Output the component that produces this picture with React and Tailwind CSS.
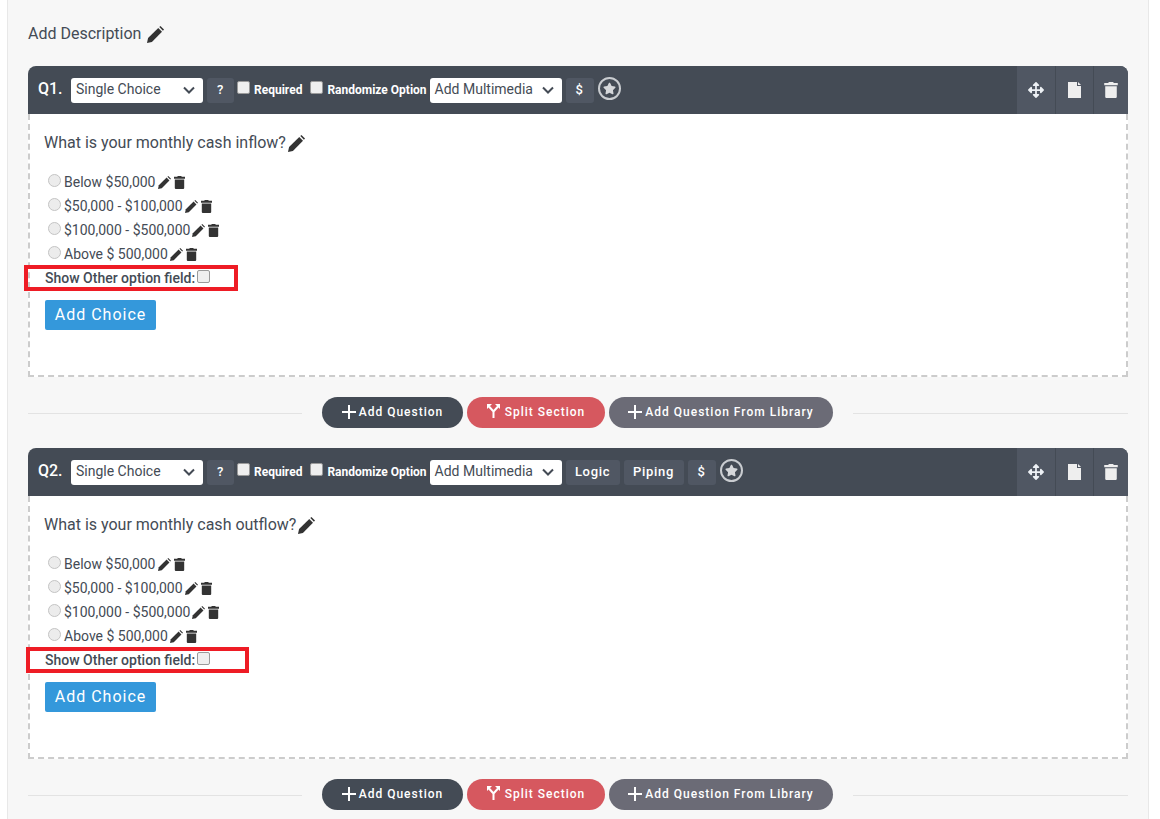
import { FaArrowsAlt, FaStar } from "react-icons/fa";

const options = ["Below $50,000", "$50,000 - $100,000", "$100,000 - $500,000", "Above $ 500,000"];

function Chevron() {
  return (
    <svg className="w-[12px] h-[8px] text-[#444b55]" viewBox="0 0 12 8" fill="none" stroke="currentColor" strokeWidth="2">
      <path d="M1 1.5l5 5 5-5" />
    </svg>
  );
}

function Pencil({ className = "" }) {
  return (
    <svg className={className} viewBox="0 0 16 16" fill="currentColor">
      <path d="M0 16l1-4.6L10.6 1.9l3.5 3.5L4.6 15z" />
      <path d="M11.6 1l1-1L16 3.4l-1 1z" />
    </svg>
  );
}

function Trash({ className = "" }) {
  return (
    <svg className={className} viewBox="0 0 11 13" fill="currentColor">
      <path d="M3.5 0h4v.8H11v1.9H0V.8h3.5z" />
      <path d="M.8 3.4h9.4V12a1 1 0 01-1 1H1.8a1 1 0 01-1-1z" />
    </svg>
  );
}

function FileIcon({ className = "" }) {
  return (
    <svg className={className} viewBox="0 0 13 16" fill="currentColor">
      <path d="M0 0h9v4h4v12H0z" />
      <path d="M10 0l3 3h-3z" />
    </svg>
  );
}

function Plus() {
  return (
    <svg className="w-[14px] h-[14px] mr-[3px]" viewBox="0 0 14 14" fill="currentColor">
      <path d="M6 0h2v6h6v2H8v6H6V8H0V6h6z" />
    </svg>
  );
}

function SplitIcon() {
  return (
    <svg className="w-[13px] h-[14px] mr-[5px] -mt-[1px]" viewBox="0 0 13 14" fill="none" stroke="currentColor" strokeWidth="2">
      <path d="M6.5 14V7.5L2 2.5M6.5 7.5L11 2.5" />
      <path d="M0 0h5L0 5zM13 0H8l5 5z" fill="currentColor" stroke="none" />
    </svg>
  );
}

function FakeSelect({ label }) {
  return (
    <div className="w-[132px] h-[25px] bg-white rounded-[3px] flex items-center justify-between pl-[5px] pr-[8px] pb-px text-[14px] text-[#444b55]">
      <span>{label}</span>
      <Chevron />
    </div>
  );
}

function HeaderButton({ children, className = "px-[10px]" }) {
  return (
    <div className={`h-[25px] bg-[#505763] rounded-[3px] flex items-center justify-center pb-px text-white text-[13px] font-medium tracking-[0.7px] ${className}`}>
      {children}
    </div>
  );
}

function Check({ className = "" }) {
  return <span className={`inline-block w-[13px] h-[13px] rounded-[2px] border border-[#9a9a9a] bg-[#efefef] ${className}`} />;
}

function OptionRow({ text }) {
  return (
    <div className="h-[24px] flex items-center pl-[3px] text-[14px] text-[#444b55]">
      <span className="w-[13px] h-[13px] rounded-full border border-[#c4c4c4] bg-[#ececec] mr-[3px] -mt-[4px]" />
      <span>{text}</span>
      <Pencil className="ml-[2px] w-[13px] h-[13px] text-[#333]" />
      <Trash className="ml-[3px] w-[11px] h-[13px] text-[#333]" />
    </div>
  );
}

function ActionRow() {
  const btn = "h-[31px] rounded-full flex items-center justify-center pb-[2px] text-white text-[12px] font-medium tracking-[1px]";
  return (
    <div className="flex items-center h-[31px] my-[20px]">
      <div className="w-[274px] h-px mt-[2px] bg-[#e3e3e3]" />
      <div className="ml-[20px] flex items-center gap-[4px]">
        <div className={`${btn} w-[141px] bg-[#444b55]`}>
          <Plus />Add Question
        </div>
        <div className={`${btn} w-[138px] bg-[#d6585f]`}>
          <SplitIcon />Split Section
        </div>
        <div className={`${btn} w-[224px] bg-[#6b6b76]`}>
          <Plus />Add Question From Library
        </div>
      </div>
      <div className="ml-[20px] flex-1 h-px mt-[2px] bg-[#e3e3e3]" />
    </div>
  );
}

function QuestionCard({ n, title, boxClass, extraButtons }) {
  return (
    <div>
      <div className="h-[48px] bg-[#444b55] rounded-t-[8px] flex items-center pl-[10px] overflow-hidden">
        <span className="text-white text-[16px] font-medium w-[33px] pb-[2px]">{n}</span>
        <FakeSelect label="Single Choice" />
        <div className="ml-[4px]"><HeaderButton>?</HeaderButton></div>
        <Check className="ml-[3px] -mt-[5px]" />
        <span className="ml-[4px] text-white text-[12px] font-bold">Required</span>
        <Check className="ml-[8px] -mt-[5px]" />
        <span className="ml-[4px] text-white text-[12px] font-bold">Randomize Option</span>
        <div className="ml-[3px]"><FakeSelect label="Add Multimedia" /></div>
        <div className="ml-[4px] flex items-center gap-[4px]">
          {extraButtons.map((b) => (
            <HeaderButton key={b} className={b === "Logic" ? "w-[54px]" : "w-[60px]"}>{b}</HeaderButton>
          ))}
          <HeaderButton>$</HeaderButton>
        </div>
        <div className="ml-[4px] -mt-[4px] w-[23px] h-[23px] rounded-full border-2 border-[#c9ccd0] flex items-center justify-center">
          <FaStar className="w-[13px] h-[13px] text-[#d5d7da]" />
        </div>
        <div className="ml-auto h-full flex">
          <div className="w-[39px] h-full bg-[#505763] border-r border-[#444b55] flex items-center justify-center">
            <FaArrowsAlt className="w-[16px] h-[16px] text-[#edf1f5]" />
          </div>
          <div className="w-[38px] h-full bg-[#505763] border-r border-[#444b55] flex items-center justify-center">
            <FileIcon className="w-[13px] h-[16px] text-[#eeeeee]" />
          </div>
          <div className="w-[34px] h-full bg-[#505763] flex items-center justify-center">
            <Trash className="w-[14px] h-[16px] text-[#eeeeee]" />
          </div>
        </div>
      </div>
      <div className="h-[263px] bg-white border-2 border-t-0 border-dashed border-[#cccccc] pl-[15px] pt-[17px]">
        <div className="h-[24px] -ml-px flex items-center text-[16px] text-[#444b55]">
          {title}
          <Pencil className="ml-[2px] w-[17px] h-[17px] text-[#333]" />
        </div>
        <div className="mt-[15px]">
          {options.map((o) => <OptionRow key={o} text={o} />)}
        </div>
        <div className="relative h-[24px] flex items-center text-[14px] font-medium text-[#444b55]">
          Show Other option field:
          <Check className="ml-[2px] -mt-[4px]" />
          <div className={`absolute top-[-1px] h-[26px] border-[4px] border-[#ee1c25] ${boxClass}`} />
        </div>
        <div className="mt-[10px] w-[111px] h-[30px] bg-[#3498db] rounded-[2px] flex items-center justify-center text-white text-[16px] tracking-[1px]">
          Add Choice
        </div>
      </div>
    </div>
  );
}

export default function App() {
  return (
    <div className="h-[819px] overflow-hidden bg-white font-['Roboto',sans-serif]">
      <div className="ml-[7px] w-[1142px] h-full bg-[#f7f7f7] border-x border-[#e8e8e8] px-[20px] pt-[22px]">
        <div className="h-[24px] flex items-center text-[16px] text-[#444b55]">
          Add Description
          <Pencil className="ml-[6px] w-[17px] h-[17px] text-[#333]" />
        </div>
        <div className="mt-[20px]">
          <QuestionCard n="Q1." title="What is your monthly cash inflow?" boxClass="left-[-21px] w-[214px]" extraButtons={[]} />
          <ActionRow />
          <QuestionCard n="Q2." title="What is your monthly cash outflow?" boxClass="left-[-19px] w-[223px]" extraButtons={["Logic", "Piping"]} />
          <ActionRow />
        </div>
      </div>
    </div>
  );
}
